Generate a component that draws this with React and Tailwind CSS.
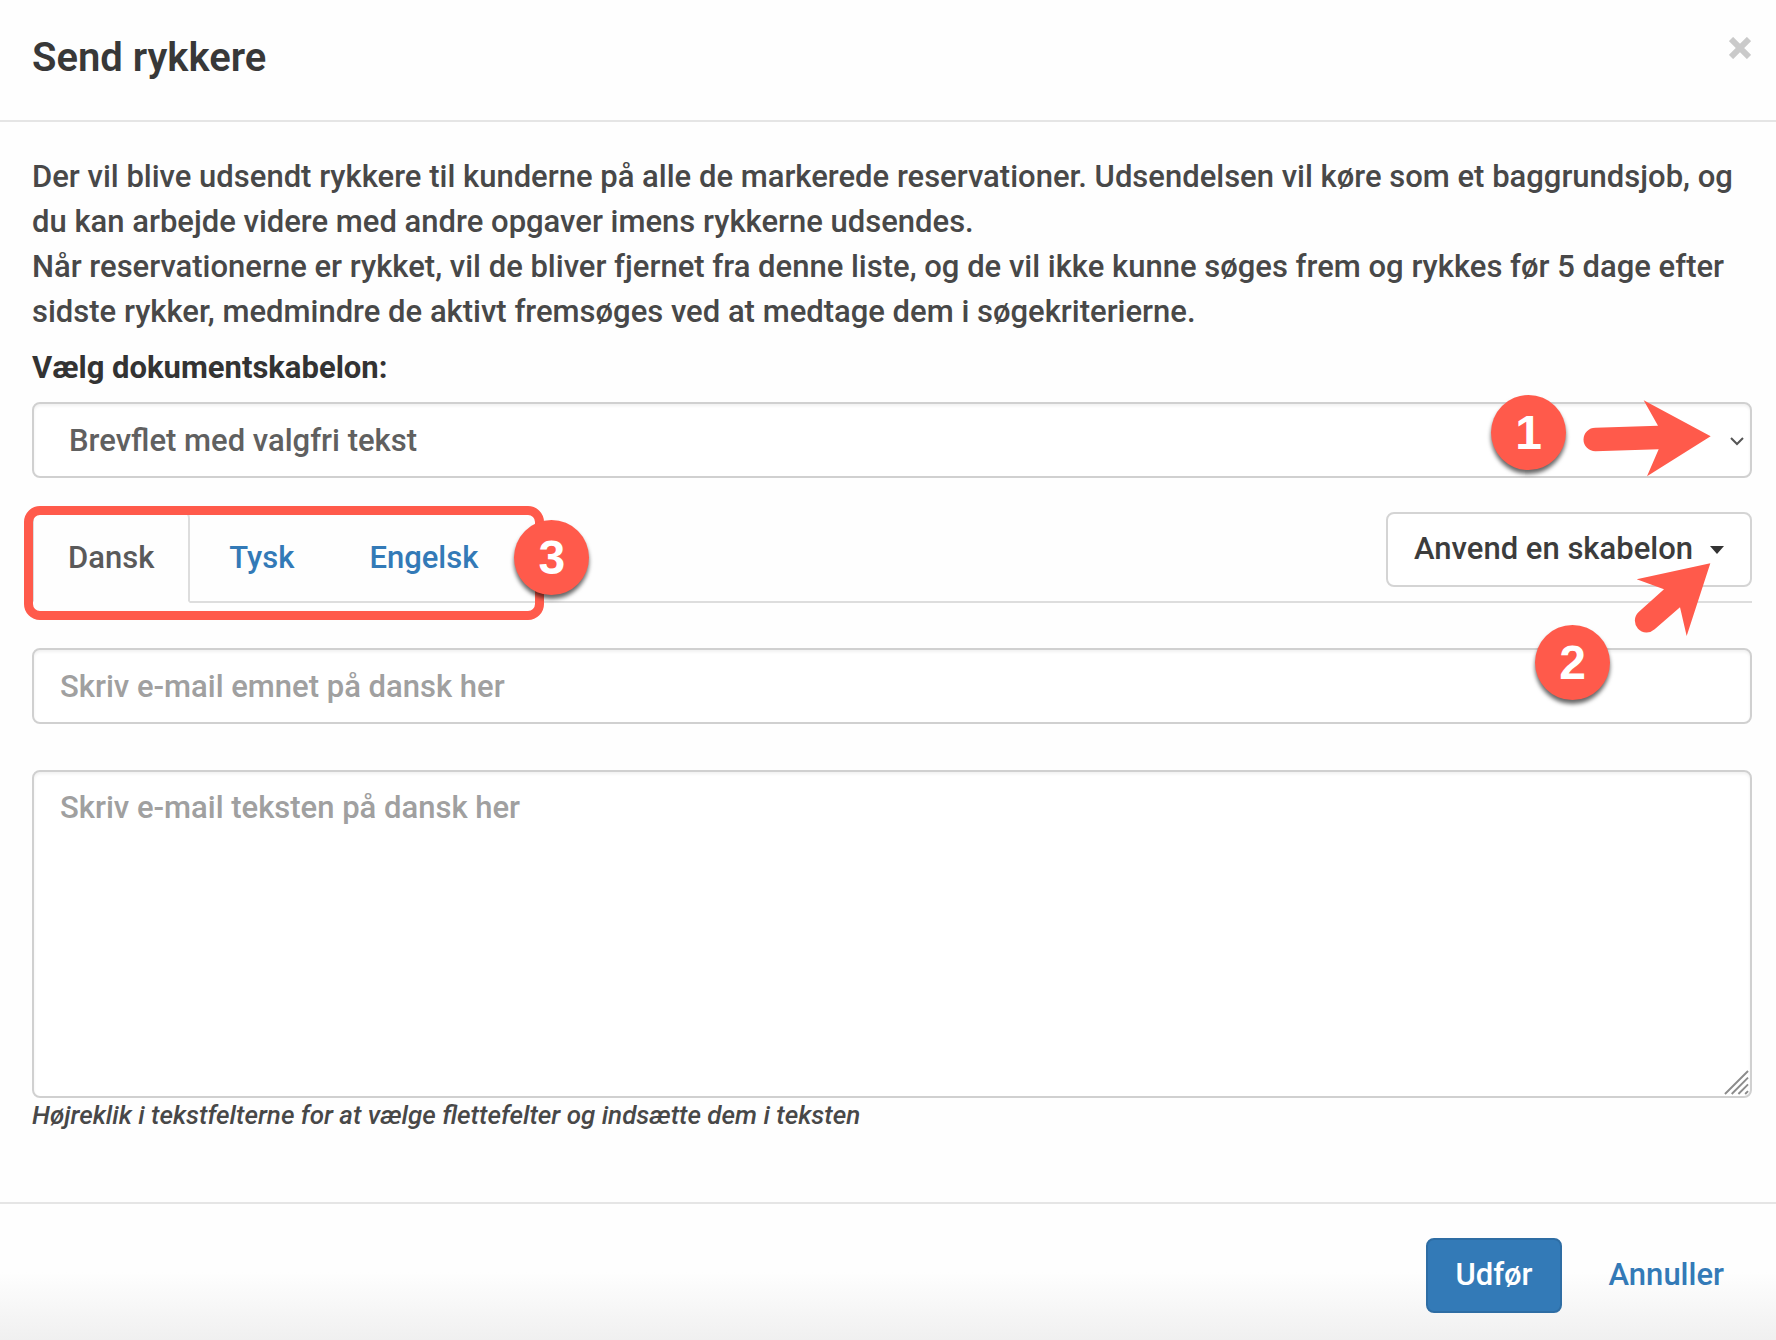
import React, { useState } from 'react';
import clsx from 'clsx';

const TABS = [
  { id: 'da', label: 'Dansk', adjective: 'dansk' },
  { id: 'de', label: 'Tysk', adjective: 'tysk' },
  { id: 'en', label: 'Engelsk', adjective: 'engelsk' },
];

const FIELD = 'block w-full rounded-lg border-2 border-[#d0d0d0] bg-white shadow-[inset_0_2px_3px_rgba(0,0,0,0.06)] outline-none';

const Badge = ({ children, className }) => (
  <span
    className={clsx(
      'pointer-events-none absolute z-20 flex size-[75px] items-center justify-center rounded-full bg-[#ff5a4b] font-["Liberation_Sans",sans-serif] text-[48px] leading-none font-bold text-white shadow-[0_4px_4px_rgba(0,0,0,0.6)]',
      className
    )}
  >
    {children}
  </span>
);

const ArrowRight = () => (
  <svg viewBox="665 88 390 237" className="pointer-events-none absolute -top-[3px] right-10 z-20 h-[79px] w-[130px]" fill="#ff5a4b" aria-hidden="true">
    <path d="M1051 200 850 92 893 168 705 174A35 35 0 0 0 705 245L895 239 860 320Z" />
  </svg>
);

const ArrowUpRight = () => (
  <svg viewBox="822 576 234 228" className="pointer-events-none absolute top-[52px] right-10 z-20 h-[76px] w-[78px]" fill="#ff5a4b" aria-hidden="true">
    <path d="M1051 580 830 628 912 658 836 726A35 35 0 0 0 884 778L960 712 980 798Z" />
  </svg>
);

const Grip = () => (
  <svg viewBox="0 0 26 26" className="pointer-events-none absolute right-[3px] bottom-[3px] size-[25px]" stroke="#8c8c8c" strokeWidth="2" aria-hidden="true">
    <path d="M1 25 25 1M8 25 25 8M15 25 25 15M22 25 25 22" />
  </svg>
);

export default function App() {
  const [active, setActive] = useState('da');
  const language = TABS.find((t) => t.id === active).adjective;

  return (
    <div
      role="dialog"
      aria-labelledby="title"
      className="flex min-h-screen flex-col bg-[#fefefe] font-[Roboto,sans-serif] text-[31px] leading-[45px] font-medium text-[#484848]"
    >
      <header className="flex items-start justify-between border-b-2 border-[#e5e5e5] pt-[30px] pr-6 pb-[34px] pl-8">
        <h1 id="title" className="text-[40px] leading-[56px] font-semibold text-[#383838]">Send rykkere</h1>
        <button type="button" aria-label="Luk" className="-mr-[7px] px-2 py-[7px]">
          <svg viewBox="0 0 22 22" className="size-[22px]" stroke="#cacaca" strokeWidth="6" strokeLinecap="butt" aria-hidden="true">
            <path d="M2 2 20 20M20 2 2 20" />
          </svg>
        </button>
      </header>

      <main className="pt-8 pr-6 pl-8">
        <p>
          Der vil blive udsendt rykkere til kunderne på alle de markerede reservationer. Udsendelsen vil køre som et baggrundsjob, og du kan arbejde videre med andre opgaver imens rykkerne udsendes.
          <br />
          Når reservationerne er rykket, vil de bliver fjernet fra denne liste, og de vil ikke kunne søges frem og rykkes før 5 dage efter sidste rykker, medmindre de aktivt fremsøges ved at medtage dem i søgekriterierne.
        </p>

        <label htmlFor="template" className="mt-[11px] mb-3 block font-bold text-[#333]">Vælg dokumentskabelon:</label>
        <div className="relative">
          <select id="template" className={clsx(FIELD, 'h-[76px] appearance-none pr-16 pl-[35px] text-[#606060]')}>
            <option>Brevflet med valgfri tekst</option>
          </select>
          <svg viewBox="0 0 14 10" className="pointer-events-none absolute top-[34px] right-2 h-[10px] w-[14px]" fill="none" stroke="#555" strokeWidth="2" aria-hidden="true">
            <path d="M1 2 7 8 13 2" />
          </svg>
          <Badge className="-top-[7px] right-[186px]">1</Badge>
          <ArrowRight />
        </div>

        {/* Sprogfaner og skabelonvalg */}
        <div className="relative mt-8 flex items-start justify-between border-b-2 border-[#ddd]">
          <div role="tablist" className="relative -mb-[2px] flex gap-[3px]">
            {TABS.map((tab) => (
              <button
                key={tab.id}
                type="button"
                role="tab"
                aria-selected={active === tab.id}
                onClick={() => setActive(tab.id)}
                className={clsx(
                  'rounded-t-lg border-2 px-[34px] pt-[23px] pb-[21px]',
                  active === tab.id ? 'border-[#ddd] border-b-[#fefefe] bg-[#fefefe] text-[#5a5a5a]' : 'border-transparent text-[#337ab7]'
                )}
              >
                {tab.label}
              </button>
            ))}
            <span className="pointer-events-none absolute -top-1 -right-[30px] -bottom-[17px] -left-2 z-10 rounded-[16px] border-[9px] border-[#ff5a4b]" />
            <Badge className="top-[10px] -right-[75px]">3</Badge>
          </div>
          <button type="button" className="mt-[2px] flex h-[75px] items-center gap-[17px] rounded-lg border-2 border-[#d4d4d4] bg-white px-[26px] pb-[2px] text-[#3c3c3c]">
            Anvend en skabelon
            <span className="mt-[2px] border-x-[7px] border-t-[8px] border-x-transparent border-t-[#333]" />
          </button>
          <ArrowUpRight />
        </div>

        <div className="relative mt-[45px]">
          <input
            type="text"
            aria-label="E-mail emne"
            placeholder={`Skriv e-mail emnet på ${language} her`}
            className={clsx(FIELD, 'h-[76px] px-[26px] placeholder:text-[#a0a0a0]')}
          />
          <Badge className="-top-[23px] right-[142px]">2</Badge>
        </div>

        <div className="relative mt-[46px]">
          <textarea
            aria-label="E-mail tekst"
            placeholder={`Skriv e-mail teksten på ${language} her`}
            className={clsx(FIELD, 'h-[328px] resize-none px-[26px] py-[13px] placeholder:text-[#a0a0a0]')}
          />
          <Grip />
        </div>
        <p className="text-[26px] leading-[34px] italic">Højreklik i tekstfelterne for at vælge flettefelter og indsætte dem i teksten</p>
      </main>

      <footer className="mt-[70px] flex grow items-start justify-end gap-[19px] border-t-2 border-[#e5e5e5] bg-linear-to-b from-[#fefefe] from-50% to-[#f0f0f0] pt-[34px] pr-6 pb-[26px] pl-8">
        <button type="button" className="h-[75px] rounded-lg border-2 border-[#2e6da4] bg-[#337ab7] px-[27px] pb-[2px] text-white">Udfør</button>
        <button type="button" className="h-[75px] px-7 pb-[2px] text-[#337ab7]">Annuller</button>
      </footer>
    </div>
  );
}
